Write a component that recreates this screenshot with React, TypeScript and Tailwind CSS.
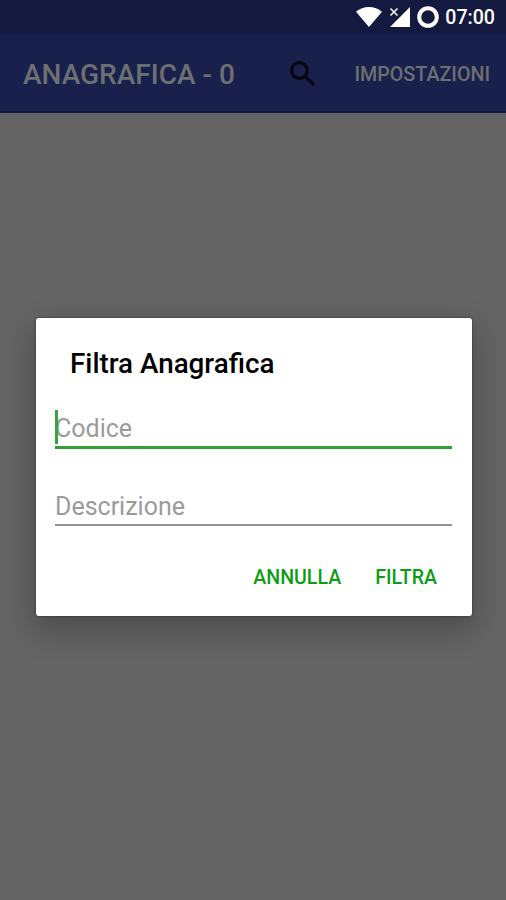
import React, { useState } from "react";

export default function App() {
  const [codice, setCodice] = useState("");
  const [descrizione, setDescrizione] = useState("");

  const handleReset = () => {
    setCodice("");
    setDescrizione("");
  };

  const handleSubmit = (e: React.FormEvent<HTMLFormElement>) => {
    e.preventDefault();
  };

  return (
    <div className="flex h-[900px] w-[506px] flex-col overflow-hidden bg-[#646464] font-[Roboto,sans-serif]">
      {/* Status bar */}
      <div className="flex h-[34px] shrink-0 items-center justify-end bg-[#141a3f] pr-[11px] text-white">
        <svg width="26" height="20" viewBox="0 0 26 20" fill="currentColor">
          <path d="M0 4.800C3.500 1.600 8 0 13 0s9.500 1.600 13 4.800L13 20z" />
        </svg>
        <svg className="ml-[7px]" width="21" height="20" viewBox="0 0 21 20" fill="currentColor">
          <path d="M21 0v20H1z" />
          <path d="M1.500 1.500l7 7M8.500 1.500l-7 7" stroke="currentColor" strokeWidth="1.500" />
        </svg>
        <svg className="ml-[7px]" width="22" height="22" viewBox="0 0 22 22" fill="none">
          <circle cx="11" cy="11" r="8.800" stroke="currentColor" strokeWidth="4" />
        </svg>
        <span className="ml-1.5 pt-0.5 text-[19.6px] leading-none font-medium">07:00</span>
      </div>

      {/* Toolbar */}
      <header className="flex h-[79px] shrink-0 items-center border-b-2 border-[#10164a] bg-[#1a204c] pt-1 pr-4 pl-[23px] text-[#6c7073]">
        <h1 className="text-[28px] leading-none font-medium whitespace-nowrap">ANAGRAFICA - 0</h1>
        <button type="button" aria-label="Cerca" className="ml-auto pb-px text-[#05070f]">
          <svg width="34" height="34" viewBox="0 0 24 24" fill="currentColor" stroke="currentColor" strokeWidth="0.3">
            <path d="M15.500 14h-.79l-.28-.27A6.471 6.471 0 0 0 16 9.500 6.500 6.500 0 1 0 9.500 16c1.610 0 3.090-.59 4.230-1.570l.27.28v.79l5 4.990L20.490 19l-4.990-5zm-6 0C7.010 14 5 11.990 5 9.500S7.010 5 9.500 5 14 7.010 14 9.500 11.990 14 9.500 14z" />
          </svg>
        </button>
        <button type="button" className="ml-[34px] pt-px text-[19.7px] leading-none font-medium">
          IMPOSTAZIONI
        </button>
      </header>

      {/* Dialog */}
      <form
        onSubmit={handleSubmit}
        className="mt-[205px] ml-9 flex h-[298px] w-[436px] flex-col rounded-[3px] bg-white pr-5 pl-[19px] shadow-[0_12px_30px_2px_rgba(0,0,0,0.25),0_0_3px_rgba(0,0,0,0.4)]"
      >
        <h2 className="mt-[30px] ml-[15px] text-[27.8px] leading-8 font-medium text-black">
          Filtra Anagrafica
        </h2>

        <div className="relative mt-[27px] h-[42px] border-b-[3px] border-[#2ea036]">
          {/* Cursor */}
          <span className="absolute top-[3px] left-0 h-[34px] w-[3px] bg-[#35a63c]" />
          <input
            value={codice}
            onChange={(e) => setCodice(e.target.value)}
            placeholder="Codice"
            className="block h-[39px] w-full pt-[3px] text-[25px] text-black caret-transparent outline-none placeholder:text-[#9b9b9b]"
          />
        </div>

        <div className="mt-[37px] h-10 border-b-2 border-[#929292]">
          <input
            value={descrizione}
            onChange={(e) => setDescrizione(e.target.value)}
            placeholder="Descrizione"
            className="block h-[38px] w-full pt-0.5 text-[25px] text-black outline-none placeholder:text-[#9b9b9b]"
          />
        </div>

        <div className="mt-10 flex justify-end gap-[34px] pr-[15px] text-[19.6px] leading-6 font-medium text-[#0c9d14]">
          <button type="button" onClick={handleReset}>
            ANNULLA
          </button>
          <button type="submit">FILTRA</button>
        </div>
      </form>
    </div>
  );
}
